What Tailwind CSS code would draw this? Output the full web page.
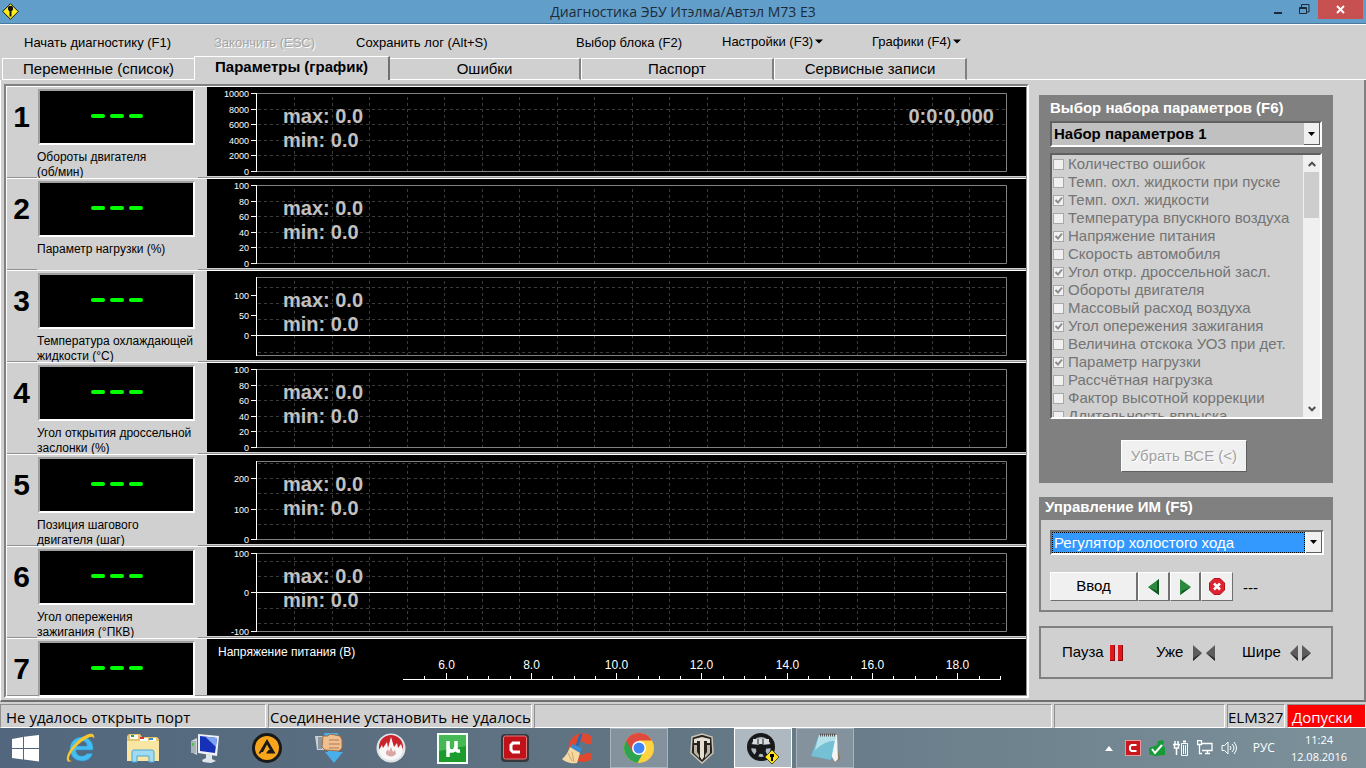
<!DOCTYPE html>
<html lang="ru">
<head>
<meta charset="utf-8">
<meta name="viewport" content="width=device-width, initial-scale=1">
<title>Диагностика ЭБУ Итэлма/Автэл М73 Е3</title>
<script src="https://cdn.jsdelivr.net/npm/@tailwindcss/browser@4"></script>
</head>
<body class="flex min-h-screen flex-col overflow-x-hidden bg-[#d0d0d0] font-['Liberation_Sans',Arial,sans-serif] text-black">

<header class="flex h-6 items-start border-b border-[#4d7a9c] bg-[#629eca]">
  <div class="w-28 pt-[3px] pl-[2px]">
    <svg width="17" height="17" viewBox="0 0 17 17" aria-hidden="true"><path d="M8.500 .7L16.300 8.500 8.500 16.300 .7 8.500z" fill="#ffee1c" stroke="#111"/><path d="M6 4.500L7 3h3l1 1.500v2L10 8H9.500v5.500h-2V8H7L6 6.500z" fill="#111"/></svg>
  </div>
  <h1 class="flex-1 text-center font-['Open_Sans','Noto_Sans',sans-serif] text-[14px] leading-6 text-[#1c2b38]">Диагностика ЭБУ Итэлма/Автэл М73 Е3</h1>
  <div class="flex w-28 justify-end pr-[3px]">
    <button aria-label="Свернуть" class="flex h-[19px] w-6 items-center justify-center pt-1"><svg width="10" height="10"><path d="M1 6h8" stroke="#1a2a36" stroke-width="2"/></svg></button>
    <button aria-label="Восстановить" class="flex h-[19px] w-7 items-center justify-center"><svg width="11" height="11" fill="none" stroke="#1a2a36"><path d="M.5 3.500h7v6h-7zM.5 4.500h7M2.500 3V.5h7.500V8H8"/></svg></button>
    <button aria-label="Закрыть" class="flex h-[19px] w-[45px] items-center justify-center bg-[#c75050]"><svg width="9" height="9"><path d="M1 1l7 7M8 1L1 8" stroke="#fff" stroke-width="2"/></svg></button>
  </div>
</header>

<nav class="flex h-8 shrink-0 items-center border-t border-white pl-6 text-[13px] leading-4">
  <button class="w-[190px] pt-1 text-left whitespace-nowrap">Начать диагностику (F1)</button>
  <button disabled class="w-[142px] pt-1 text-left whitespace-nowrap text-[#a4a4a4] [text-shadow:1px_1px_0_#fff]">Закончить (ESC)</button>
  <button class="w-[220px] pt-1 text-left whitespace-nowrap">Сохранить лог (Alt+S)</button>
  <button class="w-[146px] pt-1 text-left whitespace-nowrap">Выбор блока (F2)</button>
  <button class="flex w-[150px] items-center gap-[2px] pt-[2px] whitespace-nowrap">Настройки (F3)<svg width="8" height="5"><path d="M0 .5h8l-4 4z"/></svg></button>
  <button class="flex items-center gap-[2px] pt-[2px] whitespace-nowrap">Графики (F4)<svg width="8" height="5"><path d="M0 .5h8l-4 4z"/></svg></button>
</nav>

<div role="tablist" class="flex h-6 shrink-0 items-stretch text-[15px] leading-5">
  <button role="tab" class="mt-[2px] ml-[2px] w-48 border-t border-b border-l border-white">Переменные (список)</button>
  <button role="tab" aria-selected="true" class="w-49 border-t border-r-2 border-l border-t-white border-r-[#707070] border-l-white pb-1 font-bold">Параметры (график)</button>
  <button role="tab" class="mt-[2px] w-[191px] border-t border-r-2 border-b border-white border-r-[#808080]">Ошибки</button>
  <button role="tab" class="mt-[2px] w-[193px] border-t border-r-2 border-b border-l border-white border-r-[#808080]">Паспорт</button>
  <button role="tab" class="mt-[2px] w-[193px] border-t border-r-2 border-b border-l border-white border-r-[#808080]">Сервисные записи</button>
  <div class="flex-1 border-b border-white"></div>
</div>

<main class="flex flex-1 items-start border-r-2 border-b-2 border-l border-r-[#808080] border-b-[#707070] border-l-white pt-1 pr-[31px] pb-[2px] pl-[3px]">
  <div class="min-w-0 flex-1 border-2 border-t-[#808080] border-r-white border-b-white border-l-[#808080]">
    <div id="rows" class="border-t border-r border-l border-t-white border-r-[#909090] border-l-white"></div>
  </div>

  <aside class="mt-[11px] ml-[10px] w-[294px] shrink-0">
    <section class="flex h-[388px] flex-col bg-[#808080] px-[11px] pt-1">
      <label for="set" class="text-[15px] leading-[18px] font-bold text-white">Выбор набора параметров (F6)</label>
      <div class="mt-1 flex h-[26px] border-2 border-t-[#606060] border-r-white border-b-white border-l-[#606060] bg-[#c0c0c0]">
        <select id="set" class="min-w-0 flex-1 appearance-none pl-[2px] text-[15px] leading-5 font-bold outline-none"><option>Набор параметров 1</option></select>
        <span class="flex w-4 items-center justify-center border-r border-b border-[#606060] bg-[#f0f0f0]"><svg width="7" height="4"><path d="M0 0h7L3.500 4z"/></svg></span>
      </div>
      <div class="mt-[6px] flex h-[266px] border-2 border-t-[#606060] border-r-white border-b-white border-l-[#606060] bg-[#d0d0d0]">
        <div id="params" class="min-w-0 flex-1 overflow-hidden pl-[1px] text-[15px] leading-[18px] text-[#747474]"></div>
        <div class="flex w-[17px] flex-col items-center justify-between bg-[#f0f0f0]">
          <span class="flex h-[17px] items-center"><svg width="8" height="6" fill="none" stroke="#505050" stroke-width="2"><path d="M.7 5L4 1.700 7.300 5"/></svg></span>
          <span class="h-[46px] w-[15px] bg-[#cdcdcd]"></span>
          <span class="flex-1"></span>
          <span class="flex h-[17px] items-center"><svg width="8" height="6" fill="none" stroke="#505050" stroke-width="2"><path d="M.7 1L4 4.300 7.300 1"/></svg></span>
        </div>
      </div>
      <button disabled class="mt-[21px] mr-1 h-8 w-[126px] self-center border border-t-white border-r-[#606060] border-b-[#606060] border-l-white bg-[#f0f0f0] text-[15px] text-[#a0a0a0] [text-shadow:1px_1px_0_#fff]">Убрать ВСЕ (&lt;)</button>
    </section>

    <section class="mt-[14px] h-[115px] border-2 border-[#808080]">
      <h2 class="h-[21px] bg-[#808080] pl-1 text-[15px] leading-4 font-bold text-white"><label for="act">Управление ИМ (F5)</label></h2>
      <div class="mt-[10px] mr-[7px] ml-[9px] flex h-[25px] border-2 border-t-[#707070] border-r-white border-b-white border-l-[#707070] bg-white">
        <select id="act" class="min-w-0 flex-1 appearance-none border border-dotted border-black bg-[#3399ff] pl-[1px] text-[15px] leading-4 text-white outline-none"><option>Регулятор холостого хода</option></select>
        <span class="ml-[1px] flex w-4 items-center justify-center border-r border-b border-[#606060] bg-[#f0f0f0]"><svg width="7" height="4"><path d="M0 0h7L3.500 4z"/></svg></span>
      </div>
      <div class="mt-[17px] ml-[9px] flex h-[29px] items-stretch text-[15px]">
        <button class="w-[88px] border border-t-white border-r-2 border-r-[#707070] border-b-[#707070] border-l-white bg-[#f0f0f0]">Вво<u>д</u></button>
        <button aria-label="Назад" class="flex w-8 items-center justify-center border border-t-white border-r-2 border-r-[#707070] border-b-[#707070] border-l-white bg-[#f0f0f0]"><svg width="12" height="16"><path d="M11 0v16L0 8z" fill="#2b8a3e"/><path d="M11 16L0 8l9 4V2l2-2z" fill="#125522"/></svg></button>
        <button aria-label="Вперёд" class="flex w-[31px] items-center justify-center border border-t-white border-r-2 border-r-[#707070] border-b-[#707070] border-l-white bg-[#f0f0f0]"><svg width="12" height="16"><path d="M1 0v16L12 8z" fill="#2b8a3e"/><path d="M1 16l11-8-9 4z" fill="#125522"/></svg></button>
        <button aria-label="Стоп" class="flex w-8 items-center justify-center border border-t-white border-r-[#707070] border-b-[#707070] border-l-white bg-[#f0f0f0]"><svg width="16" height="17"><path d="M5 .5h6L15.500 5v7L11 16.500H5L.5 12V5z" fill="#dd2430" stroke="#b9101e" stroke-linejoin="round"/><path d="M5 5.500l6 6M11 5.500l-6 6" stroke="#fff" stroke-width="2.600"/></svg></button>
        <span class="pt-[5px] pl-[10px]">---</span>
      </div>
    </section>

    <section class="mt-[14px] flex h-[53px] items-center border-2 border-[#808080] pl-[21px] text-[15px]">
      <button class="flex w-[94px] items-center gap-[5px]">Пауза<svg width="16" height="17"><path d="M1 1h5v15H1zM9 1h5v15H9z" fill="#e0181c"/><path d="M5 1h1v16H1v-1h4zM13 1h1v16H9v-1h4z" fill="#8a0c10"/></svg></button>
      <button class="flex w-[86px] items-center gap-[9px]">Уже<svg width="24" height="16"><path d="M1 0v16l9-8zM23 0v16l-9-8z" fill="#5c5c5c"/><path d="M1 16l9-8-9 5zM23 16l-9-8 9 5z" fill="#303030"/></svg></button>
      <button class="flex items-center gap-[9px]">Шире<svg width="22" height="16"><path d="M8 0v16L0 8zM12 0v16l9-8z" fill="#5c5c5c"/><path d="M8 16L0 8l8 5zM12 16l9-8-9 5z" fill="#303030"/></svg></button>
    </section>
  </aside>
</main>

<footer class="flex h-[26px] shrink-0 gap-[2px] pt-[2px] font-['Open_Sans','Noto_Sans',sans-serif] text-[15px] leading-[25px] whitespace-nowrap">
  <div class="w-[266px] overflow-hidden border border-t-[#909090] border-r-white border-b-white border-l-[#909090] pl-[5px]">Не удалось открыть порт</div>
  <div class="w-[264px] overflow-hidden border border-t-[#909090] border-r-white border-b-white border-l-[#909090] pl-[1px]">Соединение установить не удалось</div>
  <div class="flex-1 border border-t-[#909090] border-r-white border-b-white border-l-[#909090]"></div>
  <div class="w-[171px] border border-t-[#909090] border-r-white border-b-white border-l-[#909090]"></div>
  <div class="w-[58px] overflow-hidden border border-t-[#909090] border-r-white border-b-white border-l-[#909090]">ELM327</div>
  <div class="w-[79px] overflow-hidden border border-t-[#909090] border-r-white border-b-white border-l-[#909090] bg-[#ff0000] pl-1 text-white">Допуски</div>
</footer>

<div class="flex h-10 shrink-0 items-stretch bg-linear-to-r from-[#52667d] via-[#627684] to-[#7d919b] font-['Open_Sans','Noto_Sans',sans-serif] text-white">
  <button aria-label="Пуск" class="flex w-[50px] items-center justify-center"><svg width="27" height="27" fill="#fff"><path d="M0 4l11-2v11H0zM12 1.800L27 0v13H12zM0 14h11v10.500L0 23zM12 14h15v12.500l-15-2z"/></svg></button>
  <button aria-label="Internet Explorer" class="flex w-[62px] items-center justify-center"><svg width="32" height="32" viewBox="0 0 32 32"><path d="M28 18H11c0 4 2.500 6 6 6 2.500 0 4-1 5-2.500h5.500C26 26.500 22 29 17 29 10 29 5 24 5 17S10 5 17 5s12 5.500 11 13zM11 14h11c0-3-2-5-5.300-5S11.500 11 11 14z" fill="#45bdf0" stroke="#2b8fcb" stroke-width=".6"/><path d="M7 29c-4 2-6 0-5-4C3.500 17 15 4.500 24 2c4-1 6 1 5 5-.5-2-2-3-5-1.500C15 9 5 20 4 26c-.3 2 1 3 3 3z" fill="#f7c52c"/></svg></button>
  <button aria-label="Проводник" class="flex w-[62px] items-center justify-center"><svg width="34" height="32" viewBox="0 0 34 32"><path d="M1 4l2-2h11l2 3h15l2 2v21H1z" fill="#e5c36b"/><path d="M4 3h8v4H4zM14 6h8v3h-8zM23 6h7v3h-7z" fill="#fff"/><path d="M5 3h3v2H5z" fill="#2aa336"/><path d="M14 5h4v2h-4z" fill="#d33"/><path d="M23 6h4v2h-4z" fill="#48c"/><path d="M1 9h32v20H1z" fill="#f9e6a2"/><path d="M6 30V20q0-2 2-2h18q2 0 2 2v10h-5v-6H11v6z" fill="#9fdcf4" stroke="#4ba6d2"/></svg></button>
  <button aria-label="Компьютер" class="flex w-[62px] items-center justify-center"><svg width="32" height="32" viewBox="0 0 32 32"><path d="M2 9l6-3v17l-6-3z" fill="#cdd6dc"/><path d="M2 9h5v12H2z" fill="#a7b3bb"/><path d="M3 11h2v3H3z" fill="#4ac63a"/><path d="M9 2l21 2-2 20-19-3z" fill="#eef2f5"/><path d="M11 4l17 2-2 15-15-2z" fill="#1730b8"/><path d="M16 4.500l12 1.500-1 9z" fill="#7fa3ef"/><path d="M17 22l6 1v4l4 2-5 2-8-1-1-2 4-2z" fill="#dfe5e9"/></svg></button>
  <button aria-label="AIMP" class="flex w-[62px] items-center justify-center"><svg width="30" height="30" viewBox="0 0 30 30"><circle cx="15" cy="15" r="15" fill="#191919"/><circle cx="15" cy="15" r="12" fill="#f8a51b"/><path d="M15 6l8.500 14.500H14l2.500-3.500h1.500l-3-5.500-4 7.500H9.500L8.500 20.500h-2z" fill="#191919"/></svg></button>
  <button aria-label="Загрузчик" class="flex w-[62px] items-center justify-center"><svg width="30" height="32" viewBox="0 0 30 32"><path d="M10 1h14v19h5L20 31l-9-11h3z" fill="#49aeea"/><path d="M1 4h9v14H3z" fill="#c9d0d4"/><path d="M4 5h4v12H4z" fill="#8b979e"/><path d="M9 4h5l2-2 10 2 2 4v8l-3 3-14-1-3-3z" fill="#eebf91" stroke="#a06b41"/><path d="M15 8h10M15 12h11M15 16h10" stroke="#b27a4f"/></svg></button>
  <button aria-label="Burning Studio" class="flex w-[61px] items-center justify-center"><svg width="30" height="30" viewBox="0 0 30 30"><circle cx="15" cy="15" r="14.500" fill="#dfe3e5"/><circle cx="15" cy="14" r="12" fill="#c9242b"/><path d="M3 17l3-5 1 3 4-6 1 6 3-11 3 10 3-4 1 5 3-4 2 6c-1 6-5 10-12 10S3 23 3 17z" fill="#f7f7f7"/><path d="M10 19l2-3 1 3 2-5 2 5 2-2 1 4q-5 5-10 0z" fill="#dba4a5"/></svg></button>
  <button aria-label="µTorrent" class="flex w-[63px] items-center justify-center"><svg width="31" height="31" viewBox="0 0 31 31"><path d="M1 1h29v29H1z" fill="#1d9b2d" stroke="#f2fff2" stroke-width="2"/><path d="M2 2h27v11L2 18z" fill="#47b954"/><path d="M11 24V8M11 8v6q0 4 3.500 4t4.500-4V8M19 8v7q0 3.500 4 3" fill="none" stroke="#fff" stroke-width="3.500"/></svg></button>
  <button aria-label="Comodo" class="flex w-[62px] items-center justify-center"><svg width="28" height="28" viewBox="0 0 28 28"><rect width="28" height="28" rx="4" fill="#35383c"/><rect x="2.500" y="2" width="23" height="23" rx="2" fill="#c01319" stroke="#e7797c"/><path d="M19 9h-7l-2 2v5l2 2h7" fill="none" stroke="#fff" stroke-width="3"/></svg></button>
  <button aria-label="CCleaner" class="flex w-[62px] items-center justify-center"><svg width="32" height="32" viewBox="0 0 32 32"><path d="M31 5v7h-6c-2-3-6-3-8-1-3 3-3 9 0 11 3 2 6 1 8-1h6v6c-5 4-13 4-18 0C6 22 6 11 12 5c5-5 14-5 19 0z" fill="#e0492f"/><path d="M20 2l-4 12" stroke="#2a6cb0" stroke-width="3"/><path d="M11 12l10 4-2 5-10-5z" fill="#3b8bd0"/><path d="M9 15l10 6-3 10c-6 1-12-1-15-4 4-3 6-7 8-12z" fill="#f5d9a4"/><path d="M7 21l4 8M11 20l2 10" stroke="#d0a565"/></svg></button>
  <button aria-label="Chrome" class="mr-1 ml-[2px] flex w-[58px] items-center justify-center border border-[#a9b5bd] bg-[#83929d]"><svg width="30" height="30" viewBox="0 0 30 30"><circle cx="15" cy="15" r="15" fill="#ffd23f"/><path d="M15 15L2 7.500A15 15 0 0 0 13.500 29.900L19 20z" fill="#2da44f"/><path d="M15 15L8.500 18.700 2 7.500A15 15 0 0 1 28 7.500H15z" fill="#de4a3d"/><circle cx="15" cy="15" r="7" fill="#fff"/><circle cx="15" cy="15" r="5.500" fill="#4285f4"/></svg></button>
  <button aria-label="World of Tanks" class="flex w-[60px] items-center justify-center"><svg width="24" height="31" viewBox="0 0 24 31"><path d="M2 4l10-3 10 3 1 16-11 10L1 20z" fill="#26231f" stroke="#cbc5b7" stroke-width="1.500"/><path d="M4 6l8-2 8 2v4h-3V8h-3v16l-2 3-2-3V8H7v2H4z" fill="#e4dfd1"/><path d="M4 12h3v7l2 3v3l-5-5zM20 12h-3v7l-2 3v3l5-5z" fill="#bcb5a5"/></svg></button>
  <button aria-label="Диагностика ЭБУ" class="mx-[2px] flex w-[58px] items-center justify-center border border-white bg-[#adb8c0]"><svg width="32" height="32" viewBox="0 0 32 32"><circle cx="14" cy="15" r="12" fill="none" stroke="#17191b" stroke-width="4"/><circle cx="14" cy="17" r="5" fill="#17191b"/><path d="M3 14l9 1M16 15l9-1M12 19L8 26M16 19l4 7" stroke="#17191b" stroke-width="4"/><path d="M6 7h16v5H6z" fill="#d9dcde"/><path d="M11 7v5M16 7v5" stroke="#17191b"/><path d="M25 18l7 7-7 7-7-7z" fill="#ffe31b" stroke="#55500b"/><path d="M23 22h4v3h-1v4h-2v-4h-1z"/></svg></button>
  <button aria-label="Блокнот" class="mx-[2px] flex w-[58px] items-center justify-center border border-[#a9b5bd] bg-[#83929d]"><svg width="32" height="32" viewBox="0 0 32 32"><path d="M26 3l5 24-6 4z" fill="#8a7b5c"/><path d="M10 3h18l1 24-3 3z" fill="#f3f5f5"/><path d="M10 3h17l-5 25L2 24z" fill="#74c0d4"/><path d="M10 3h17l-1 6q-9-1-20 9z" fill="#b5e1ea"/><path d="M11 3h16" stroke="#555" stroke-dasharray="1 1" stroke-width="3"/></svg></button>

  <div class="ml-auto flex items-center gap-2 pr-[19px]">
    <button aria-label="Скрытые значки" class="mr-1"><svg width="8" height="5" fill="#fff"><path d="M4 0l4 5H0z"/></svg></button>
    <svg width="16" height="16" role="img" aria-label="Comodo"><rect x=".5" y=".5" width="15" height="15" fill="#c9171e" stroke="#e9999b"/><path d="M11.500 5H6.500L5 6.500v3L6.500 11h5" fill="none" stroke="#fff" stroke-width="2"/></svg>
    <svg width="16" height="16" role="img" aria-label="Безопасное извлечение"><path d="M0 8l8-3 1-4 5-1 1 3-2 3 3 1v8l-10 1-6-2z" fill="#169b36"/><path d="M3 9l3 4 7-8" fill="none" stroke="#fff" stroke-width="2"/></svg>
    <svg width="16" height="16" role="img" aria-label="Питание" fill="none" stroke="#fff"><path d="M2 1v3M5 1v3M0 4.500h7M1.500 5v3h4V5M3.500 8v7" stroke-width="1.500"/><path d="M8.500 3.500h6v12h-6z"/><path d="M10 1.500h3" stroke-width="2"/><path d="M10.500 5v9M12.500 5v9"/></svg>
    <svg width="16" height="16" role="img" aria-label="Сеть" fill="none" stroke="#fff"><path d="M5 3.500h10v7H5M8 13.500h5M10.500 11v2M.5.500h4v4h-4zM2.500 5v8.500H5" stroke-width="1.300"/></svg>
    <svg width="16" height="16" role="img" aria-label="Громкость" fill="none" stroke="#fff"><path d="M1 5.500h2.500L7 2v12l-3.500-3.500H1z"/><path d="M9 6q2 2 0 4M11 4q4 4 0 8M13 2q5 6 0 12"/></svg>
    <button class="ml-2 text-[12px]">РУС</button>
    <div class="ml-2 text-center text-[11px] leading-[17px]"><div>11:24</div><div>12.08.2016</div></div>
  </div>
</div>

<script>
const fifths = [22, 37, 53, 68];
const percent = [["100", 6], ["80", 22], ["60", 37], ["40", 53], ["20", 68], ["0", 84]];
const channels = [
  { name: "Обороты двигателя<br>(об/мин)", ticks: [["10000", 6], ["8000", 22], ["6000", 37], ["4000", 53], ["2000", 68], ["0", 84]], grid: fifths, time: "0:0:0,000" },
  { name: "Параметр нагрузки (%)", ticks: percent, grid: fifths },
  { name: "Температура охлаждающей<br>жидкости (°C)", ticks: [["100", 24], ["50", 44], ["0", 64]], grid: [16, 32, 48, 81], zero: 64 },
  { name: "Угол открытия дроссельной<br>заслонки (%)", ticks: percent, grid: fifths },
  { name: "Позиция шагового<br>двигателя (шаг)", ticks: [["200", 23], ["100", 54], ["0", 84]], grid: [8, 23, 38, 54, 69] },
  { name: "Угол опережения<br>зажигания (°ПКВ)", ticks: [["100", 6], ["0", 45], ["-100", 84]], grid: [14, 29, 61, 76], zero: 45 },
];
const led = `<div role="img" aria-label="---" class="flex h-14 w-[157px] items-center justify-center gap-[5px] border-2 border-t-[#a0a0a0] border-r-white border-b-white border-l-[#a0a0a0] bg-black pb-[2px]"><i class="h-1 w-[14px] rounded-full bg-[#00ff00]"></i><i class="h-1 w-[14px] rounded-full bg-[#00ff00]"></i><i class="h-1 w-[14px] rounded-full bg-[#00ff00]"></i></div>`;

function plot(c) {
  let s = "";
  for (let i = 1; i < 20; i++) { const x = Math.floor(50 + i * 37.5) + 0.5; s += `<path d="M${x} 10V84" stroke="#3c3c3c" stroke-dasharray="3 3"/>`; }
  c.grid.forEach(y => s += `<path d="M51 ${y + 0.5}H799" stroke="#3c3c3c" stroke-dasharray="3 3"/>`);
  s += `<path d="M50 6.500H799.500V84.500H50" fill="none" stroke="#808080"/>`;
  if (c.zero) s += `<path d="M50 ${c.zero + 0.5}H799" stroke="#fff"/>`;
  s += `<path d="M49.500 6V85" stroke="#fff"/>`;
  c.ticks.forEach(([t, y]) => s += `<path d="M44 ${y + 0.5}H50" stroke="#fff"/><text x="42" y="${y + 4}" text-anchor="end" fill="#fff" font-size="9">${t}</text>`);
  s += `<g fill="#c0c0c0" font-size="20" font-weight="bold"><text x="76" y="36">max: 0.0</text><text x="76" y="60">min: 0.0</text>${c.time ? `<text x="787" y="36" text-anchor="end">${c.time}</text>` : ""}</g>`;
  return s;
}
function ruler() {
  let s = `<text x="11" y="17" fill="#fff" font-size="12">Напряжение питания (В)</text><path d="M196 40.500H794" stroke="#fff"/>`;
  for (let i = 1; i <= 28; i++) {
    const x = Math.round(196 + i * 21.32) + 0.5, major = i % 4 === 2 && i < 27;
    s += `<path d="M${x} ${major ? 34 : 37}V40" stroke="#fff"/>`;
    if (major) s += `<text x="${x}" y="30" text-anchor="middle" fill="#fff" font-size="12">${5 + i / 2}.0</text>`;
  }
  return s;
}
document.getElementById("rows").innerHTML = channels.map((c, i) => `
  <div class="h-[92px] border-b border-white"><div class="flex h-[91px] border-b border-[#909090]">
    <div class="w-[31px] pt-[13px] pr-[2px] text-center text-[30px] leading-[34px] font-bold">${i + 1}</div>
    <div class="w-[169px] pt-[2px]">${led}<div class="-ml-[1px] mt-[5px] h-7 w-[161px] overflow-hidden bg-[#d0d0d0] text-[12px] leading-[15px] whitespace-nowrap">${c.name}</div></div>
    <div class="h-[89px] min-w-0 flex-1 bg-black"><svg class="block h-[89px] w-full" viewBox="0 0 819 89" preserveAspectRatio="xMinYMin meet">${plot(c)}</svg></div>
  </div></div>`).join("") + `
  <div class="flex h-[57px] border-b border-[#909090]">
    <div class="w-[31px] pt-[13px] pr-[2px] text-center text-[30px] leading-[34px] font-bold">7</div>
    <div class="w-[169px] pt-[2px]">${led}</div>
    <div class="h-14 min-w-0 flex-1 bg-black"><svg class="block h-14 w-full" viewBox="0 0 819 56" preserveAspectRatio="xMinYMin meet">${ruler()}</svg></div>
  </div>`;

const params = [["Количество ошибок", 0], ["Темп. охл. жидкости при пуске", 0], ["Темп. охл. жидкости", 1], ["Температура впускного воздуха", 0], ["Напряжение питания", 1], ["Скорость автомобиля", 0], ["Угол откр. дроссельной засл.", 1], ["Обороты двигателя", 1], ["Массовый расход воздуха", 0], ["Угол опережения зажигания", 1], ["Величина отскока УОЗ при дет.", 0], ["Параметр нагрузки", 1], ["Рассчётная нагрузка", 0], ["Фактор высотной коррекции", 0], ["Длительность впрыска", 0]];
document.getElementById("params").innerHTML = params.map(([t, on]) => `<label class="flex h-[18px] items-center gap-[4px] whitespace-nowrap"><span class="grid"><input type="checkbox" disabled ${on ? "checked" : ""} class="peer col-start-1 row-start-1 h-[11px] w-[11px] appearance-none border border-[#a8a8a8] bg-[#f0f0f0]"><svg width="11" height="11" class="invisible col-start-1 row-start-1 peer-checked:visible"><path d="M2.500 5l2.500 2.500 4-5" fill="none" stroke="#8c8c8c" stroke-width="2"/></svg></span>${t}</label>`).join("");
</script>
</body>
</html>
